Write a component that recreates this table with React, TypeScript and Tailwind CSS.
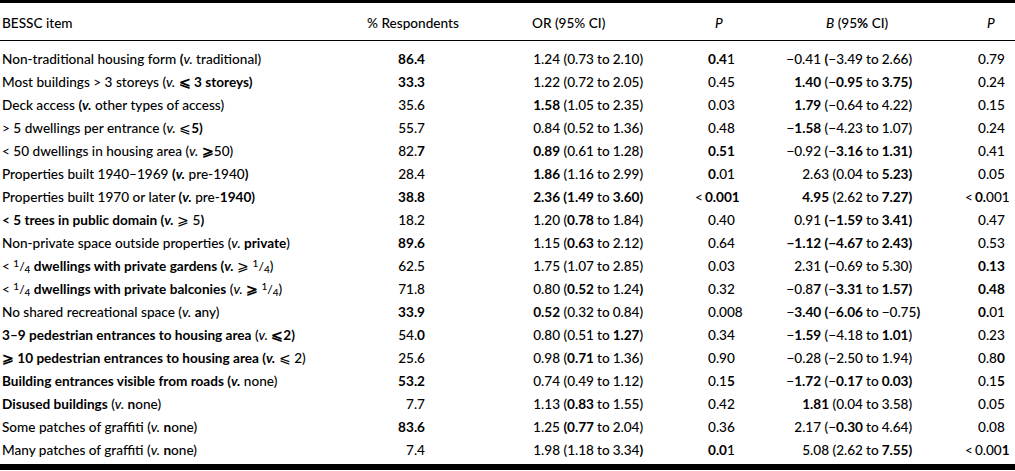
import type { ReactNode } from 'react';

type Row = [string, string, string, string, string, string, string, string];

// markup: **bold**, _italic_, {q} = one quarter
const rows: Row[] = [
  ['Non-traditional housing form **(**_v._ traditional)', '**86.4**', '1.24 (0.73', '2.10)', '**0.4**1', '−0.41 **(**−3.49', '2.66)', '0.79'],
  ['Most buildings > 3 storeys (_v._ **⩽ 3 storeys)**', '**33.3**', '1.22 (0.72', '2.05)', '0.45', '**1.40** (−**0.95**', '**3.75)**', '0.24'],
  ['Deck access **(_v._** other types of access)', '35.6', '**1.58** (1.05', '2.35)', '0.03', '**1.79** (−0.64', '4.22)', '0.15'],
  ['> 5 dwellings per entrance (_v._ ⩽**5)**', '55.7', '0.84 (0.52', '1.36)', '0.48', '−**1.58** (−4.23', '1.07)', '0.24'],
  ['< 50 dwellings in housing area (_v._ **⩾**50)', '82.**7**', '**0.89** (0.61', '1.28)', '**0.51**', '−0.92 (−**3.16**', '**1.31)**', '0.41'],
  ['Properties built 1940–1969 **(_v._** pre-1940**)**', '28.4', '**1.86** (1.16', '2.99)', '**0.**01', '2.63 (0.04', '**5.23)**', '0.05'],
  ['Properties built 1970 or later **(_v._** pre-**1940)**', '**38.8**', '**2.36 (1.49**', '**3.60)**', '<**0.001**', '**4.95** (2.62', '**7.27)**', '<**0.**001'],
  ['**< 5 trees in public domain (_v._** ⩾ 5**)**', '18.2', '1.20 (**0.78**', '1.84)', '0.40', '0.91 **(−1.59**', '**3.41)**', '0.47'],
  ['Non-private space outside properties (_v._ **private**)', '**89.6**', '1.15 (**0.63**', '2.12)', '0.64', '**−1.12 (−4.67**', '**2.43)**', '0.53'],
  ['< {q} **dwellings with private gardens (_v._** ⩾ {q})', '62.5', '1.75 (1.07', '2.85)', '0.03', '2.31 **(**−0.69', '5.30)', '**0.13**'],
  ['< {q} **dwellings with private balconies** (_v._ **⩾** {q})', '71.8', '0.80 (**0.52**', '1.24**)**', '0.32', '−0.8**7** (−**3.31**', '**1.57)**', '**0.48**'],
  ['No shared recreational space (_v._ **a**ny)', '**33.9**', '**0.52** (0.32', '0.84)', '0.008', '−**3.40 (**−**6.06**', '−0.75**)**', '**0.**01'],
  ['**3–9 pedestrian entrances to housing area** (_v._ **⩽2)**', '54.**0**', '0.80 (0.51', '**1.27**)', '0.34', '−**1.59** (−4.18', '**1.01**)', '0.23'],
  ['**⩾ 10 pedestrian entrances to housing area (_v._** ⩽ 2)', '25.6', '0.98 (**0.71**', '1.36)', '0.90', '−0.28 (−2.50', '1.94)', '0.8**0**'],
  ['**Building entrances visible from roads (_v._** none)', '**53.2**', '0.74 (0.49', '1.12)', '0.1**5**', '−**1.72** (−**0.17**', '**0.03)**', '0.1**5**'],
  ['**Disused buildings** (_v._ **n**one)', '7.7', '1.13 (**0.83**', '1.55)', '0.42', '**1.81** (0.04', '3.58)', '0.05'],
  ['Some patches of graffiti (_v._ **n**one)', '**83.6**', '1.25 **(0.77**', '2.04)', '0.36', '2.17 (−**0.30**', '4.64)', '0.08'],
  ['Many patches of graffiti (_v._ **n**one)', '7.4', '1.98 (1.18', '3.34**)**', '**0.0**1', '5.08 (2.62', '**7.55)**', '<0.00**1**'],
];

function Quarter() {
  return (
    <span className="inline-flex items-baseline text-[10px] leading-none">
      <span className="relative -top-[4px]">1</span>
      <span className="text-[12px]">/</span>
      <span className="relative top-[2px]">4</span>
    </span>
  );
}

function rich(s: string): ReactNode[] {
  const parts = s.split(/(\*\*.+?\*\*|_.+?_|\{q\})/g);
  return parts.map((p, i) => {
    if (p.length > 4 && p.startsWith('**') && p.endsWith('**')) return <b key={i}>{rich(p.slice(2, -2))}</b>;
    if (p.length > 2 && p.startsWith('_') && p.endsWith('_')) return <i key={i}>{p.slice(1, -1)}</i>;
    if (p === '{q}') return <Quarter key={i} />;
    return p;
  });
}

function PVal({ v }: { v: string }) {
  if (v.startsWith('<')) {
    return (
      <span>
        <span className="-ml-[13px] mr-[2px]">&lt;</span>
        {rich(v.slice(1))}
      </span>
    );
  }
  return <span>{rich(v)}</span>;
}

const grid = 'grid grid-cols-[366px_94px_220px_70px_200px_65px]';

export default function App() {
  return (
    <div className="w-[1015px] h-[471px] bg-white text-black font-['Lato','Open_Sans',sans-serif] text-[13.6px] font-medium overflow-hidden">
      <div className="border-t-[3px] border-b-[6px] border-black">
        <div className={grid + ' h-[38px] items-center pt-[3px] border-b border-black'}>
          <div className="pl-[2px]">BESSC item</div>
          <div className="text-center">% Respondents</div>
          <div className="pl-[72px]">OR (95% CI)</div>
          <div className="pl-[35px]"><i>P</i></div>
          <div className="pl-[76px]"><i>B</i> (95<b>%</b> CI)</div>
          <div className="pl-[37px]"><i>P</i></div>
        </div>
        <div className="pt-[7px] pb-[2px]">
          {rows.map((r, idx) => (
            <div key={idx} className={grid + ' h-[23px] items-center whitespace-nowrap'}>
              <div className="pl-[2px]">{rich(r[0])}</div>
              <div className="text-right pr-[35px]">{rich(r[1])}</div>
              <div className="flex">
                <span className="w-[134px] text-right">{rich(r[2])}</span>
                <span className="px-[3px]">to</span>
                <span>{rich(r[3])}</span>
              </div>
              <div className="pl-[28px]"><PVal v={r[4]} /></div>
              <div className="flex">
                <span className="w-[113px] text-right">{rich(r[5])}</span>
                <span className="px-[3px]">to</span>
                <span>{rich(r[6])}</span>
              </div>
              <div className="pl-[28px]"><PVal v={r[7]} /></div>
            </div>
          ))}
        </div>
      </div>
    </div>
  );
}
